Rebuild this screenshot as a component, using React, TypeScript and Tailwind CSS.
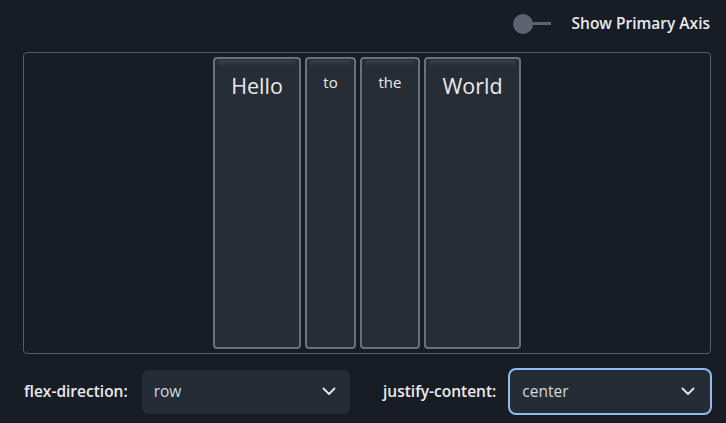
import React, { useState } from "react";

const words = [
    { text: "Hello", w: "w-[88px]", big: true },
    { text: "to", w: "w-[51px]", big: false },
    { text: "the", w: "w-[60px]", big: false },
    { text: "World", w: "w-[97px]", big: true },
];

function Chevron() {
    return (
        <svg width="14" height="9" viewBox="0 0 14 9" fill="none">
            <path d="M1.5 1.5L7 7L12.5 1.5" stroke="#e5e7eb" strokeWidth="1.8" strokeLinecap="round" strokeLinejoin="round" />
        </svg>
    );
}

export default function App() {
    const [axis, setAxis] = useState(false);

    return (
        <div className="h-[423px] w-[726px] overflow-hidden bg-[#181d25] font-['Open_Sans',sans-serif] text-[#e8eaed]">
            <div className="flex h-[46px] items-center justify-end pt-px pr-[16px]">
                <button onClick={() => setAxis(!axis)} className="mr-[21px] flex items-center">
                    <span className="h-5 w-5 rounded-full bg-[#5b646f]" />
                    <span className="-ml-px h-[3px] w-[19px] bg-[#5b646f]" />
                </button>
                <span className="text-[15.5px] font-semibold">Show Primary Axis</span>
            </div>

            <div className="mt-[6px] ml-[23px] mr-[15px] flex h-[302px] justify-center gap-1 rounded-[4px] border border-[#555d68] py-1">
                {words.map((word) => (
                    <div
                        key={word.text}
                        className={`${word.w} relative flex justify-center rounded-[4px] border-2 border-[#69717c] bg-[#272d35]`}
                    >
                        <div className="absolute top-px right-[3px] left-[3px] h-[7px] rounded-t-[3px] bg-gradient-to-b from-[#39404a] to-[#272d35]" />
                        <span
                            className={
                                word.big
                                    ? "pt-[13px] text-[21.5px] leading-7"
                                    : "pt-[13px] text-[15px] leading-5"
                            }
                        >
                            {word.text}
                        </span>
                    </div>
                ))}
            </div>

            <div className="mt-[14px] grid grid-cols-[326px_329px] gap-[33px] pl-[24px]">
                <div className="flex items-center gap-[14px]">
                    <span className="text-[15.5px] font-semibold">flex-direction:</span>
                    <div className="flex h-[44px] flex-1 items-center justify-between rounded-[6px] bg-[#262c35] pr-[14px] pl-[12px]">
                        <span className="text-[15.5px] text-[#d4d7dc]">row</span>
                        <Chevron />
                    </div>
                </div>
                <div className="flex items-center gap-[12px]">
                    <span className="text-[15.5px] font-semibold">justify-content:</span>
                    <div className="flex h-[47px] flex-1 items-center justify-between rounded-[8px] border-2 border-[#8dbcf0] bg-[#262c35] pr-[15px] pl-[12px]">
                        <span className="text-[15.5px] text-[#d4d7dc]">center</span>
                        <Chevron />
                    </div>
                </div>
            </div>
        </div>
    );
}
